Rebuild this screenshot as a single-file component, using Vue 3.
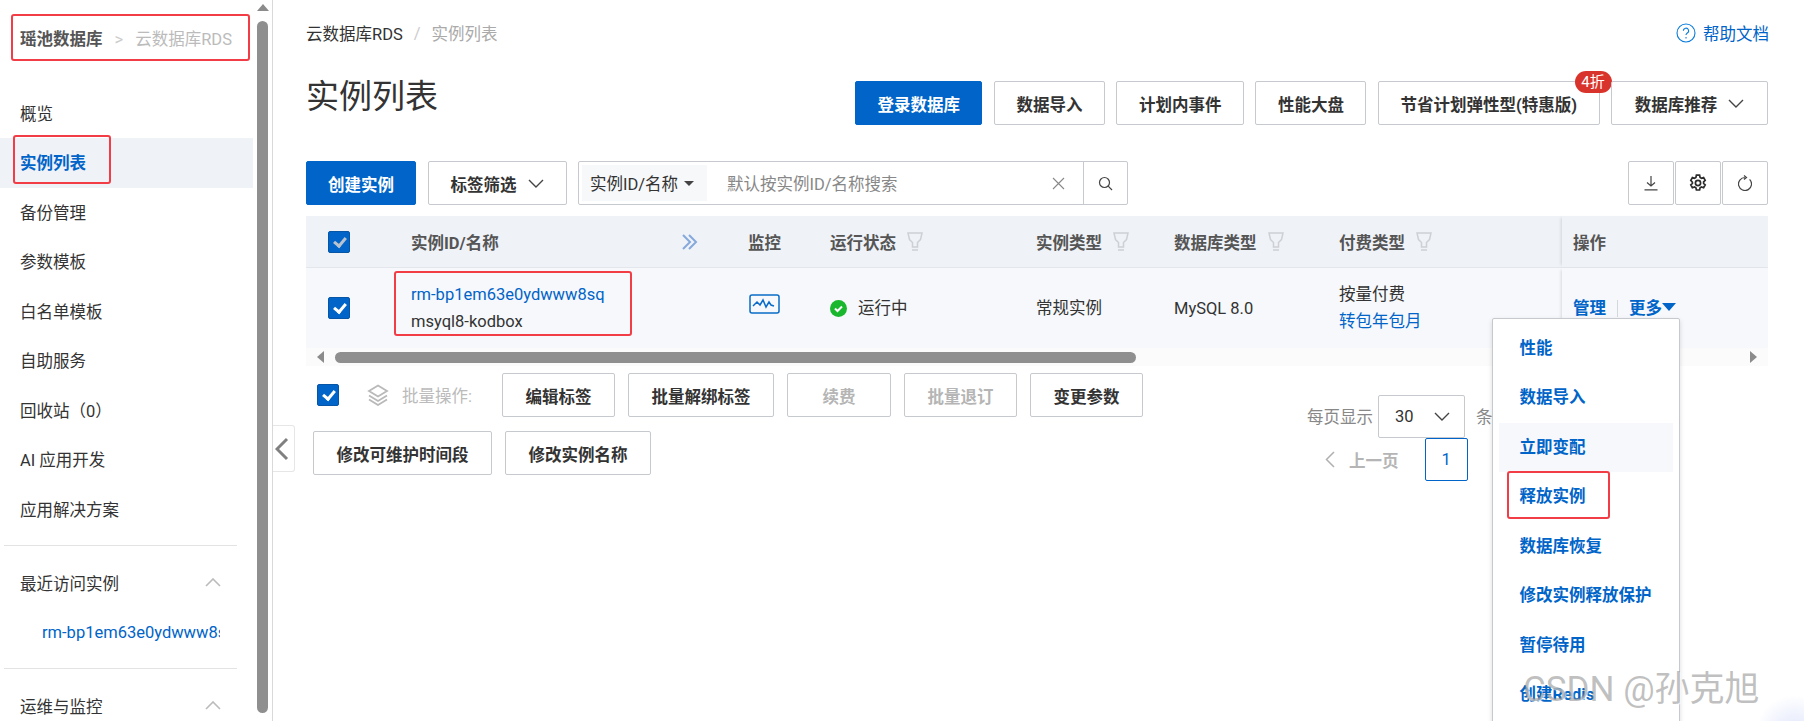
<template>
  <div class="page">
    <aside class="sidebar">
      <div class="sideNav">
        <div class="sideHead">
          <b>瑶池数据库</b>
          <span class="sideHeadSep">&gt;</span>
          <span class="sideHeadSub">云数据库RDS</span>
          <i class="redBox headBox"></i>
        </div>
        <div
          v-for="item in menu"
          :key="item"
          class="menuItem"
          :class="{ active: item === '实例列表' }"
        >
          {{ item }}
          <i v-if="item === '实例列表'" class="redBox activeBox"></i>
        </div>
        <div class="sideDivider"></div>
        <div class="sideGroup">
          <span>最近访问实例</span>
          <svg width="16" height="9" viewBox="0 0 16 9"><path d="M1 8l7-7 7 7" class="thinLine" /></svg>
        </div>
        <div class="recent"><span>rm-bp1em63e0ydwww8sq</span></div>
        <div class="sideDivider"></div>
        <div class="sideGroup">
          <span>运维与监控</span>
          <svg width="16" height="9" viewBox="0 0 16 9"><path d="M1 8l7-7 7 7" class="thinLine" /></svg>
        </div>
      </div>
      <div class="sideScroll">
        <div class="arrowUp"></div>
        <div class="sideThumb"></div>
      </div>
    </aside>

    <button class="collapse">
      <svg width="14" height="24" viewBox="0 0 14 24"><path d="M12 2L2 12l10 10" /></svg>
    </button>

    <main class="main">
      <div class="topBar">
        <div class="crumbs">
          <span>云数据库RDS</span>
          <span class="crumbSep">/</span>
          <span class="crumbNow">实例列表</span>
        </div>
        <a class="help">
          <svg width="20" height="20" viewBox="0 0 20 20">
            <circle cx="10" cy="10" r="9" />
            <path d="M7.4 7.8a2.6 2.6 0 1 1 3.9 2.2c-.9.6-1.3 1-1.3 2.100" />
            <path d="M10 14v1.400" />
          </svg>
          帮助文档
        </a>
      </div>

      <div class="pageHead">
        <h1>实例列表</h1>
        <div class="headBtns">
          <button class="btn primary">登录数据库</button>
          <button class="btn">数据导入</button>
          <button class="btn">计划内事件</button>
          <button class="btn">性能大盘</button>
          <button class="btn">
            节省计划弹性型(特惠版)
            <span class="badge">4折</span>
          </button>
          <button class="btn">
            数据库推荐
            <svg class="chev" width="16" height="9" viewBox="0 0 16 9"><path d="M1 1l7 7 7-7" /></svg>
          </button>
        </div>
      </div>

      <div class="toolbar">
        <button class="btn primary create">创建实例</button>
        <button class="btn">
          标签筛选
          <svg class="chev" width="16" height="9" viewBox="0 0 16 9"><path d="M1 1l7 7 7-7" /></svg>
        </button>
        <div class="search">
          <div class="searchType">实例ID/名称<i class="caret"></i></div>
          <span class="placeholder">默认按实例ID/名称搜索</span>
          <svg class="clear" width="13" height="13" viewBox="0 0 13 13"><path d="M1 1l11 11M12 1L1 12" /></svg>
          <div class="searchBtn">
            <svg width="15" height="15" viewBox="0 0 15 15">
              <circle cx="6.500" cy="6.500" r="5" />
              <path d="M10.200 10.200L14 14" />
            </svg>
          </div>
        </div>
        <div class="iconBtns">
          <div class="iconBtn">
            <svg width="16" height="16" viewBox="0 0 16 16"><path d="M8 1v10M4 7.500L8 11l4-3.500M1.500 14.800h13" /></svg>
          </div>
          <div class="iconBtn gear">
            <svg width="18" height="18" viewBox="0 0 18 18">
              <path d="M7.400 1.200h3.200l.5 2.200 1.400.8 2.100-.7 1.600 2.800-1.600 1.500v1.600l1.600 1.500-1.600 2.800-2.100-.7-1.400.8-.5 2.200H7.400l-.5-2.200-1.400-.8-2.100.7-1.600-2.800 1.600-1.500V8.200L1.800 6.300l1.600-2.800 2.100.7 1.400-.8z" />
              <circle cx="9" cy="9" r="2.600" />
            </svg>
          </div>
          <div class="iconBtn">
            <svg width="14" height="16" viewBox="0 0 14 16"><path d="M7 2.500A6.500 6.500 0 1 0 11.600 4.400M6 .5l2.500 2L6 4.500" /></svg>
          </div>
        </div>
      </div>

      <div class="tableRow tableHead">
        <div class="cellCheck"><i class="check"></i></div>
        <div class="headName">
          实例ID/名称
          <svg width="17" height="16" viewBox="0 0 17 16"><path d="M2 1l7 7-7 7M8 1l7 7-7 7" /></svg>
        </div>
        <div>监控</div>
        <div v-for="title in filterHeads" :key="title" class="headFilter">
          {{ title }}
          <svg class="funnel" width="16" height="19" viewBox="0 0 16 19">
            <path d="M1 1h14l-1.500 6.500-3 3V15H5.500v-4.500l-3-3z" />
            <path d="M5 18h6" />
          </svg>
        </div>
        <div class="cellOps">操作</div>
      </div>

      <div class="tableRow tableBody">
        <div class="cellCheck"><i class="check light"></i></div>
        <div class="cellName">
          <a>rm-bp1em63e0ydwww8sq</a>
          <span>msyql8-kodbox</span>
          <i class="redBox nameBox"></i>
        </div>
        <div>
          <svg class="monitor" width="31" height="20" viewBox="0 0 31 20">
            <rect x="1" y="1" width="29" height="18" rx="2" />
            <path d="M4 12l4-4 3 3 3-5 3 7 3-5 2 3 3 1" />
          </svg>
        </div>
        <div class="status">
          <svg width="17" height="17" viewBox="0 0 17 17">
            <circle cx="8.500" cy="8.500" r="8.500" />
            <path d="M5 8.500l2.500 2.500 4.500-4.500" />
          </svg>
          运行中
        </div>
        <div>常规实例</div>
        <div>MySQL 8.0</div>
        <div class="payCell">
          <span>按量付费</span>
          <a>转包年包月</a>
        </div>
        <div class="cellOps opsLinks">
          <a>管理</a>
          <i class="opsSep"></i>
          <a>更多</a>
          <i class="opsCaret"></i>
        </div>
      </div>

      <div class="hScroll">
        <div class="arrowLeft"></div>
        <div class="hThumb"></div>
        <div class="arrowRight"></div>
      </div>

      <div class="bottomArea">
        <div class="batch">
          <i class="check light batchCheck"></i>
          <svg class="layers" width="22" height="22" viewBox="0 0 22 22">
            <path d="M11 1.500l9 5.500-9 5.500L2 7z" />
            <path d="M2 11.500l9 5.500 9-5.500" />
            <path d="M2 15.500l9 5.500 9-5.500" />
          </svg>
          <span class="batchLabel">批量操作:</span>
          <button
            v-for="b in batchBtns"
            :key="b.text"
            class="btn"
            :class="{ disabled: b.disabled }"
          >
            {{ b.text }}
          </button>
        </div>
        <div class="pager">
          <div class="pageSize">
            <span class="pageLabel">每页显示</span>
            <div class="pageSelect">
              30
              <svg class="chev" width="16" height="9" viewBox="0 0 16 9"><path d="M1 1l7 7 7-7" /></svg>
            </div>
            <span class="pageLabel">条</span>
          </div>
          <div class="pageNav">
            <svg width="10" height="17" viewBox="0 0 10 17"><path d="M9 1L1.500 8.500 9 16" /></svg>
            <b>上一页</b>
            <div class="pageNum">1</div>
          </div>
        </div>
      </div>
    </main>

    <div class="dropdown">
      <div
        v-for="item in moreMenu"
        :key="item"
        class="dropItem"
        :class="{ hovered: item === '立即变配' }"
      >
        {{ item }}
        <i v-if="item === '释放实例'" class="redBox dropBox"></i>
      </div>
    </div>

    <div class="watermark">CSDN @孙克旭</div>
  </div>
</template>

<script setup>
const menu = ['概览', '实例列表', '备份管理', '参数模板', '白名单模板', '自助服务', '回收站（0）', 'AI 应用开发', '应用解决方案']
const filterHeads = ['运行状态', '实例类型', '数据库类型', '付费类型']
const batchBtns = [
  { text: '编辑标签' },
  { text: '批量解绑标签' },
  { text: '续费', disabled: true },
  { text: '批量退订', disabled: true },
  { text: '变更参数' },
  { text: '修改可维护时间段' },
  { text: '修改实例名称' }
]
const moreMenu = ['性能', '数据导入', '立即变配', '释放实例', '数据库恢复', '修改实例释放保护', '暂停待用', '创建Redis']
</script>

<style>
html, body {
  margin: 0;
  background: #fff;
  overflow: hidden;
}
</style>

<style scoped>
.page {
  position: relative;
  display: flex;
  height: 721px;
  width: 1804px;
  overflow: hidden;
  font-family: Roboto, "Noto Sans CJK SC", sans-serif;
  font-size: 16.5px;
  color: #333;
  background: radial-gradient(circle at 1795px 735px, #dfe4fb 0, #ffffff 40px) #fff;
}
svg {
  fill: none;
  display: block;
  flex: none;
}
a {
  color: #0064c8;
}
i {
  font-style: normal;
}

/* sidebar */
.sidebar {
  display: flex;
  width: 273px;
  box-sizing: border-box;
  border-right: 1px solid #d9d9d9;
  flex: none;
}
.sideNav {
  width: 257px;
  flex: none;
}
.sideHead {
  position: relative;
  height: 88.5px;
  box-sizing: border-box;
  padding: 28px 0 0 20px;
  display: flex;
  align-items: flex-start;
  line-height: 24px;
  white-space: nowrap;
}
.sideHead b {
  color: #555;
}
.sideHeadSep {
  margin: 0 12px;
  color: #ccc;
}
.sideHeadSub {
  color: #bbb;
}
.menuItem {
  position: relative;
  height: 49.5px;
  width: 253px;
  line-height: 49.5px;
  padding: 1px 0 0 20px;
  box-sizing: border-box;
}
.menuItem.active {
  background: #eff2f7;
  color: #0064c8;
  font-weight: 700;
}
.sideDivider {
  height: 1px;
  background: #e3e3e3;
  margin: 11px 20px 12px 4px;
}
.sideGroup {
  height: 49.5px;
  display: flex;
  align-items: center;
  justify-content: space-between;
  padding: 0 36px 0 20px;
}
.thinLine {
  stroke: #bbb;
  stroke-width: 1.6;
}
.recent {
  height: 49.5px;
  line-height: 49.5px;
  padding-left: 42px;
}
.recent span {
  display: block;
  width: 178px;
  overflow: hidden;
  white-space: nowrap;
  color: #0064c8;
}
.sideScroll {
  width: 11px;
  display: flex;
  flex-direction: column;
  align-items: center;
}
.arrowUp {
  margin-top: 4px;
  border-left: 6px solid transparent;
  border-right: 6px solid transparent;
  border-bottom: 7px solid #8b8b8b;
}
.sideThumb {
  margin-top: 10px;
  width: 11px;
  height: 692px;
  background: #8f8f8f;
  border-radius: 6px;
}
.collapse {
  position: absolute;
  left: 273px;
  top: 425px;
  width: 22px;
  height: 47px;
  padding: 0 0 0 2px;
  box-sizing: border-box;
  background: #fff;
  border: 1px solid #e6e6e6;
  border-left: 0;
  border-radius: 0 3px 3px 0;
}
.collapse path {
  stroke: #808080;
  stroke-width: 3;
}

/* main */
.main {
  flex: 1;
  min-width: 0;
  padding: 0 36px 0 33px;
}
.topBar {
  display: flex;
  justify-content: space-between;
  align-items: center;
  padding-top: 21px;
  height: 24px;
}
.crumbs {
  display: flex;
  align-items: center;
}
.crumbSep {
  margin: 0 11px;
  color: #ccc;
}
.crumbNow {
  color: #aaa;
}
.help {
  display: flex;
  align-items: center;
  gap: 7px;
  margin-right: -1px;
}
.help svg {
  stroke: #0a7cdc;
  stroke-width: 1.1;
}
.pageHead {
  margin-top: 36px;
  display: flex;
  justify-content: space-between;
}
h1 {
  margin: 0;
  font-size: 33px;
  font-weight: 400;
  line-height: 32px;
}
.headBtns {
  display: flex;
  gap: 11.5px;
}
.btn {
  position: relative;
  height: 44px;
  min-width: 104px;
  padding: 1px 22px 0;
  box-sizing: border-box;
  display: flex;
  align-items: center;
  justify-content: center;
  gap: 11px;
  font-family: inherit;
  font-size: 16.5px;
  font-weight: 700;
  color: #333;
  background: #fff;
  border: 1px solid #c6c9ce;
  border-radius: 2px;
  white-space: nowrap;
}
.headBtns .btn {
  padding: 1px 21.5px 0;
}
.headBtns .btn:last-child {
  padding: 1px 22.75px 0;
}
.btn.primary {
  background: #0064c8;
  border-color: #0064c8;
  color: #fff;
}
.btn.create {
  padding: 1px 21px 0;
}
.btn.disabled {
  color: #b5b5b5;
}
.chev path {
  stroke: #444;
  stroke-width: 1.4;
}
.badge {
  position: absolute;
  right: -13px;
  top: -11px;
  height: 22px;
  width: 37px;
  border-radius: 11px;
  background: #d9342b;
  color: #fff;
  font-size: 15px;
  font-weight: 400;
  line-height: 22px;
  text-align: center;
}
.toolbar {
  margin-top: 36px;
  display: flex;
  gap: 11.5px;
  height: 44px;
}
.search {
  width: 550px;
  box-sizing: border-box;
  display: flex;
  align-items: center;
  border: 1px solid #c6c9ce;
  border-radius: 2px;
}
.searchType {
  height: 36px;
  margin-left: 3px;
  padding: 0 8px;
  width: 125px;
  box-sizing: border-box;
  display: flex;
  align-items: center;
  gap: 6px;
  background: #f7f8fa;
}
.caret {
  border-left: 5px solid transparent;
  border-right: 5px solid transparent;
  border-top: 5.5px solid #444;
}
.placeholder {
  margin-left: 20px;
  color: #888;
  flex: 1;
}
.clear {
  margin-right: 18px;
}
.clear path {
  stroke: #888;
  stroke-width: 1.1;
}
.searchBtn {
  width: 43px;
  height: 100%;
  border-left: 1px solid #c6c9ce;
  display: flex;
  align-items: center;
  justify-content: center;
}
.searchBtn svg,
.iconBtn svg {
  stroke: #444;
  stroke-width: 1.2;
}
.iconBtn.gear svg {
  stroke: #2b2b2b;
  stroke-width: 1.7;
}
.iconBtns {
  margin-left: auto;
  display: flex;
  gap: 1px;
}
.iconBtn {
  width: 46px;
  box-sizing: border-box;
  display: flex;
  align-items: center;
  justify-content: center;
  border: 1px solid #c6c9ce;
  border-radius: 2px;
}

/* table */
.tableRow {
  display: grid;
  grid-template-columns: 105px 337px 82px 206px 138px 165px 223px 1fr;
  align-items: center;
}
.tableHead {
  margin-top: 11px;
  height: 52px;
  box-sizing: border-box;
  background: #eff2f7;
  border-bottom: 1px solid #e3e6ea;
  font-weight: 700;
  color: #555;
}
.tableBody {
  height: 80px;
  background: #f6f8fb;
  line-height: 27px;
}
.cellCheck {
  padding-left: 22px;
}
.check {
  position: relative;
  display: block;
  width: 22px;
  height: 22px;
  box-sizing: border-box;
  background: #0064c8;
  border: 1px solid #0756a6;
  border-radius: 2px;
}
.check::after {
  content: "";
  position: absolute;
  left: 6.500px;
  top: 3px;
  width: 5px;
  height: 9px;
  border: solid #b9c3cf;
  border-width: 0 3px 3px 0;
  transform: rotate(40deg);
}
.check.light::after {
  border-color: #fff;
}
.headName {
  display: flex;
  align-items: center;
  justify-content: space-between;
  padding-right: 50px;
}
.headName svg {
  stroke: #86a9dc;
  stroke-width: 2;
}
.headFilter {
  display: flex;
  align-items: center;
  gap: 11px;
}
.funnel path {
  stroke: #cdd0d5;
  stroke-width: 1.5;
}
.cellOps {
  align-self: stretch;
  display: flex;
  align-items: center;
  padding-left: 11px;
  box-shadow: -3px 0 3px -2px rgba(0, 0, 0, 0.12);
}
.cellName {
  position: relative;
  display: flex;
  flex-direction: column;
}
.monitor {
  margin-left: 1px;
  margin-top: -8px;
}
.monitor rect,
.monitor path {
  stroke: #0a6cc8;
  stroke-width: 1.5;
}
.status {
  display: flex;
  align-items: center;
  gap: 11px;
}
.status circle {
  fill: #19b72e;
}
.status path {
  stroke: #fff;
  stroke-width: 2;
}
.payCell {
  display: flex;
  flex-direction: column;
}
.opsLinks a {
  font-weight: 700;
}
.opsSep {
  width: 1px;
  height: 17px;
  margin: 0 11px;
  background: #d4d7dc;
}
.opsCaret {
  border-left: 7.500px solid transparent;
  border-right: 7.500px solid transparent;
  border-top: 8px solid #0064c8;
  margin-top: -2px;
}
.hScroll {
  height: 18px;
  display: flex;
  align-items: center;
  padding: 0 11px;
  background: #fbfbfb;
}
.arrowLeft {
  border-top: 6.500px solid transparent;
  border-bottom: 6.500px solid transparent;
  border-right: 7px solid #8b8b8b;
}
.hThumb {
  margin-left: 11px;
  width: 801px;
  height: 11px;
  background: #8f8f8f;
  border-radius: 6px;
}
.arrowRight {
  margin-left: auto;
  border-top: 6.500px solid transparent;
  border-bottom: 6.500px solid transparent;
  border-left: 7px solid #8b8b8b;
}
.bottomArea {
  margin-top: 7px;
  display: flex;
}
.batch {
  width: 840px;
  flex: none;
  display: flex;
  flex-wrap: wrap;
  align-items: center;
  align-content: flex-start;
  gap: 14px 13px;
  padding-left: 7px;
  box-sizing: border-box;
}
.batch .btn {
  padding: 1px 22.500px 0;
}
.batchCheck {
  margin-left: 4px;
}
.layers {
  margin-left: 15px;
}
.layers path {
  stroke: #b9b9b9;
  stroke-width: 1.8;
}
.batchLabel {
  margin-right: 17px;
  color: #bbb;
}
.pager {
  margin-left: 161px;
  padding-top: 21px;
}
.pageSize {
  display: flex;
  align-items: center;
  gap: 5px;
  height: 44px;
}
.pageLabel {
  color: #888;
}
.pageSelect {
  width: 87px;
  height: 43px;
  box-sizing: border-box;
  padding: 0 14px 0 16px;
  display: flex;
  align-items: center;
  justify-content: space-between;
  border: 1px solid #c6c9ce;
  border-radius: 2px;
}
.pageLabel:last-child {
  margin-left: 6px;
}
.pageNav {
  margin-left: 18px;
  display: flex;
  align-items: center;
  color: #b5b5b5;
}
.pageNav svg {
  stroke: #b0b0b0;
  stroke-width: 1.500;
}
.pageNav b {
  margin-left: 14px;
  margin-right: 26px;
  white-space: nowrap;
}
.pageNum {
  width: 43.500px;
  height: 43px;
  box-sizing: border-box;
  border: 1px solid #0064c8;
  border-radius: 2px;
  color: #0064c8;
  display: flex;
  align-items: center;
  justify-content: center;
}

/* more menu */
.dropdown {
  position: absolute;
  left: 1491.500px;
  top: 318px;
  width: 188px;
  height: 420px;
  box-sizing: border-box;
  padding: 4.500px 6px;
  background: #fff;
  border: 1px solid #c6c9ce;
  border-radius: 2px;
  box-shadow: 0 2px 5px rgba(0, 0, 0, 0.14);
}
.dropItem {
  position: relative;
  height: 49.5px;
  line-height: 49.5px;
  padding-left: 21px;
  color: #0064c8;
  font-weight: 700;
  white-space: nowrap;
}
.dropItem.hovered {
  background: #f6f8fb;
}

/* red marks from the screenshot */
.redBox {
  position: absolute;
  box-sizing: border-box;
  border: 2px solid #f23c46;
  border-radius: 3px;
  pointer-events: none;
}
.headBox {
  left: 11px;
  top: 14px;
  width: 239px;
  height: 47px;
}
.activeBox {
  left: 13px;
  top: -3px;
  width: 98px;
  height: 49px;
}
.nameBox {
  left: -17px;
  top: -10px;
  width: 238px;
  height: 65px;
}
.dropBox {
  left: 8.500px;
  top: -1px;
  width: 102.500px;
  height: 48px;
}
.watermark {
  position: absolute;
  left: 1523px;
  top: 664px;
  font-size: 35px;
  line-height: 52px;
  color: rgba(130, 130, 130, 0.5);
  text-shadow: 1px 1px 1px rgba(255, 255, 255, 0.7);
  white-space: nowrap;
}
</style>
